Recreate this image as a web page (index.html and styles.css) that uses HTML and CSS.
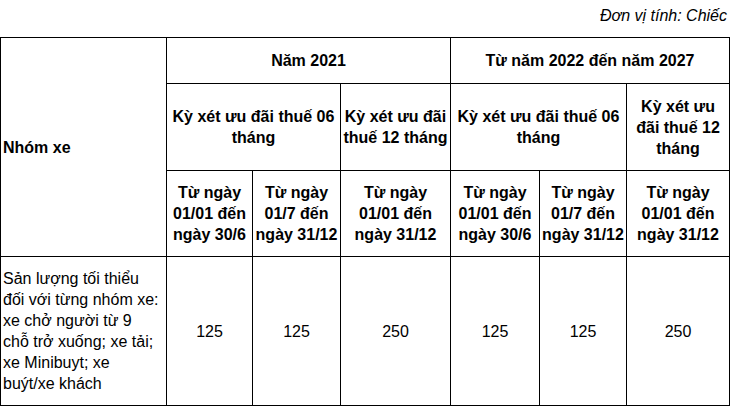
FILE: index.html
```html
<!DOCTYPE html>
<html lang="vi">
<head>
<meta charset="utf-8">
<link rel="stylesheet" href="styles.css">
</head>
<body>
<p class="unit">Đơn vị tính: Chiếc</p>
<table class="grid">
<colgroup>
<col class="c1"><col class="c2"><col class="c3"><col class="c4"><col class="c5"><col class="c6"><col class="c7">
</colgroup>
<tr class="r1">
<th rowspan="3" class="left">Nhóm xe</th>
<th colspan="3">Năm 2021</th>
<th colspan="3">Từ năm 2022 đến năm 2027</th>
</tr>
<tr class="r2">
<th colspan="2">Kỳ xét ưu đãi thuế 06 tháng</th>
<th>Kỳ xét ưu đãi thuế 12 tháng</th>
<th colspan="2">Kỳ xét ưu đãi thuế 06 tháng</th>
<th>Kỳ xét ưu đãi thuế 12 tháng</th>
</tr>
<tr class="r3">
<th>Từ ngày 01/01 đến ngày 30/6</th>
<th>Từ ngày 01/7 đến ngày 31/12</th>
<th>Từ ngày 01/01 đến ngày 31/12</th>
<th>Từ ngày 01/01 đến ngày 30/6</th>
<th>Từ ngày 01/7 đến ngày 31/12</th>
<th>Từ ngày 01/01 đến ngày 31/12</th>
</tr>
<tr class="r4">
<td class="left">Sản lượng tối thiểu đối với từng nhóm xe: xe chở người từ 9 chỗ trở xuống; xe tải; xe Minibuyt; xe buýt/xe khách</td>
<td>125</td>
<td>125</td>
<td>250</td>
<td>125</td>
<td>125</td>
<td>250</td>
</tr>
</table>
</body>
</html>
```
FILE: styles.css
```css
html, body {
  margin: 0;
  padding: 0;
  background: #fff;
}
body {
  font-family: "Liberation Sans", Arial, sans-serif;
  font-size: 16px;
  color: #000;
  width: 733px;
}
.unit {
  margin: 0;
  height: 37px;
  box-sizing: border-box;
  padding: 7px 6px 0 0;
  text-align: right;
  font-style: italic;
  line-height: 18px;
}
.grid {
  border-collapse: collapse;
  table-layout: fixed;
  width: 729px;
}
.c1 { width: 166px; }
.c2 { width: 86px; }
.c3 { width: 88px; }
.c4 { width: 110px; }
.c5 { width: 89px; }
.c6 { width: 87px; }
.c7 { width: 103px; }
.grid th, .grid td {
  border: 1px solid #000;
  padding: 0 1px;
  line-height: 21px;
  text-align: center;
  vertical-align: middle;
  font-weight: normal;
}
.grid th {
  font-weight: bold;
}
.grid .left {
  text-align: left;
  padding-left: 2px;
  padding-right: 6px;
}
.r1 { height: 46px; }
.r2 { height: 87px; }
.r3 { height: 86px; }
.r4 { height: 149px; }
```
